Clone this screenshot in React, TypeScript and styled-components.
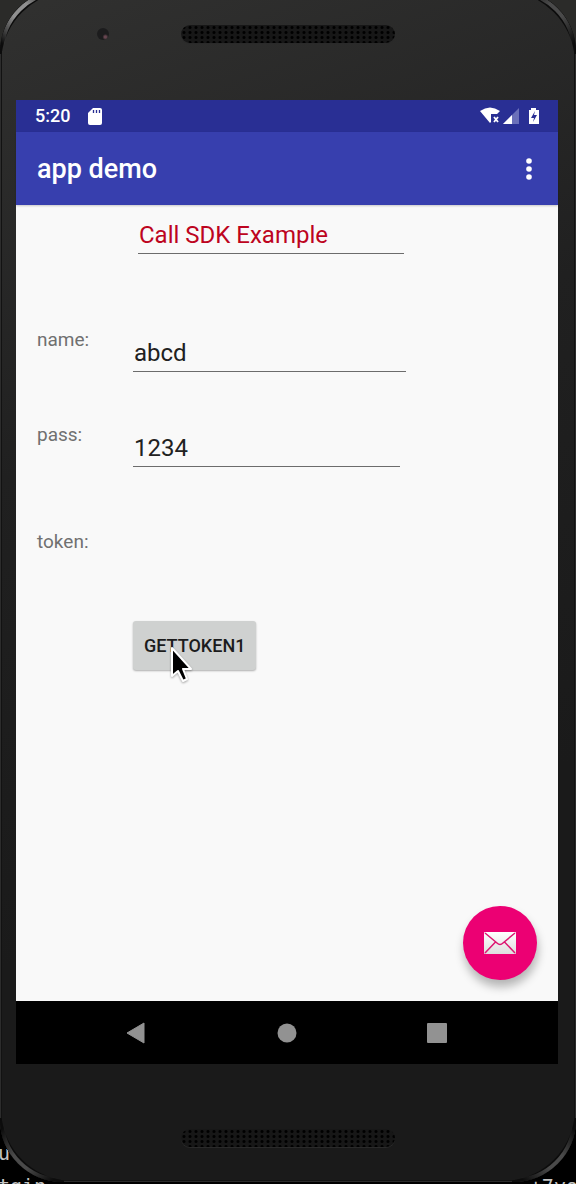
import React, { useState } from "react";
import styled, { createGlobalStyle } from "styled-components";

const GlobalStyle = createGlobalStyle`
  * { box-sizing: border-box; }
  html, body { margin: 0; padding: 0; background: #000; }
  body, button, input { font-family: Roboto, "Liberation Sans", sans-serif; }
`;

const Desktop = styled.div`
  position: relative;
  display: flex;
  min-height: 100vh;
  padding-bottom: 2px;
  overflow: hidden;
  background: linear-gradient(#2b2b29 0 120px, #000 120px);
`;

const TerminalText = styled.span<{ $side: "left" | "right"; $bottom: number }>`
  position: absolute;
  ${(p) => p.$side}: -2px;
  bottom: ${(p) => p.$bottom}px;
  color: #c4c4c4;
  font: 20px/20px "DejaVu Sans Mono", monospace;
  white-space: pre;
`;

const Phone = styled.div`
  position: relative;
  display: flex;
  flex-direction: column;
  flex: 1;
  min-width: 0;
  margin-top: -10px;
  border-radius: 62px;
  background: linear-gradient(160deg, #313130, #202020 35%, #1a1a1a 70%);
  box-shadow: inset 0 0 0 1px #2c2c2c, inset 0 0 0 2px #121212;
`;

const CornerArt = styled.svg<{ $x: "left" | "right"; $y: "top" | "bottom" }>`
  position: absolute;
  ${(p) => p.$x}: 0;
  ${(p) => p.$y}: 0;
  width: 64px;
  height: 64px;
  transform: scale(${(p) => (p.$x === "left" ? 1 : -1)}, ${(p) => (p.$y === "top" ? 1 : -1)});
`;

const Bezel = styled.div<{ $height: number; $top: number }>`
  position: relative;
  display: flex;
  justify-content: center;
  flex: none;
  height: ${(p) => p.$height}px;
  padding-top: ${(p) => p.$top}px;
`;

const Speaker = styled.div`
  width: 38%;
  max-width: 214px;
  height: 18px;
  border-radius: 9px;
  background: radial-gradient(circle, #000 0 1px, #171717 2px) 0 0 / 6px 5px;
  box-shadow: 0 1px 0 #2a2a2a;
`;

const Camera = styled.div`
  position: absolute;
  top: 38px;
  left: 97px;
  width: 12px;
  height: 12px;
  border-radius: 50%;
  background: radial-gradient(circle at 70% 75%, #674650 0 1px, #1c1c1d 3px);
`;

const Screen = styled.main`
  display: flex;
  flex-direction: column;
  flex: 1;
  margin: 0 18px 0 16px;
  background: #f9f9f9;
`;

const StatusBar = styled.div`
  display: flex;
  align-items: center;
  height: 32px;
  padding: 0 18px 0 19px;
  background: #292f94;
  color: #fff;
  font-size: 18px;
  font-weight: 500;
  line-height: 24px;
`;

const CardIcon = styled.svg`
  margin-left: 18px;
`;

const StatusIcons = styled.svg`
  margin-left: auto;
`;

const AppBar = styled.header`
  display: flex;
  align-items: center;
  justify-content: space-between;
  height: 73px;
  padding: 0 17px 0 21px;
  background: #373fae;
  color: #fff;
  box-shadow: 0 1px 2px rgba(0, 0, 0, 0.2);
`;

const Title = styled.h1`
  margin: 0;
  font-size: 27px;
  font-weight: 500;
  line-height: 32px;
`;

const IconButton = styled.button`
  display: flex;
  align-items: center;
  justify-content: center;
  width: 24px;
  height: 40px;
  padding: 0;
  border: 0;
  background: none;
  cursor: pointer;
`;

const Form = styled.form`
  display: flex;
  flex-direction: column;
  flex: 1;
  padding: 11px 21px 21px;
`;

const Heading = styled.div`
  display: flex;
  padding: 0 133px 0 101px;
`;

const Row = styled.div<{ $gap: number; $end: number }>`
  display: flex;
  align-items: flex-start;
  margin-top: ${(p) => p.$gap}px;
  padding-right: ${(p) => p.$end}px;
`;

const Label = styled.label`
  flex: none;
  width: 96px;
  color: #707070;
  font-size: 19px;
  line-height: 24px;
`;

const Field = styled.input<{ $accent?: boolean }>`
  flex: 1;
  min-width: 0;
  height: 38px;
  margin: 0;
  padding: 1px 0 0 1px;
  border: 0;
  border-bottom: 1px solid #6c6c6c;
  border-radius: 0;
  outline: 0;
  background: none;
  color: ${(p) => (p.$accent ? "#bd0420" : "#212121")};
  font-size: 24px;

  ${Row} & {
    margin-top: 6px;
  }
`;

const Action = styled.div`
  position: relative;
  align-self: flex-start;
  margin: 67px 0 0 96px;
`;

const TokenButton = styled.button`
  height: 49px;
  padding: 0 11px;
  border: 0;
  border-radius: 3px;
  background: #cfd1d0;
  color: #1c1c1c;
  font-size: 18px;
  font-weight: 500;
  box-shadow: 0 1px 2px rgba(0, 0, 0, 0.3);
`;

const Pointer = styled.svg`
  position: absolute;
  top: 24px;
  left: 36px;
  pointer-events: none;
  filter: drop-shadow(0 1px 1px rgba(0, 0, 0, 0.35));
`;

const Fab = styled.button`
  display: flex;
  align-items: center;
  justify-content: center;
  align-self: flex-end;
  width: 74px;
  height: 74px;
  margin-top: auto;
  padding: 0;
  border: 0;
  border-radius: 50%;
  background: #ec0073;
  box-shadow: 1px 7px 10px rgba(0, 0, 0, 0.28);
`;

const NavBar = styled.nav`
  display: flex;
  align-items: center;
  justify-content: space-between;
  height: 63px;
  padding: 0 109px 0 108px;
  background: #000;
`;

function Corner({ x, y }: { x: "left" | "right"; y: "top" | "bottom" }) {
  const bright = x === "left" && y === "top";
  const rim = `rim-${x}-${y}`;
  const tone = bright ? "#909090" : "#4a4a4a";
  return (
    <CornerArt $x={x} $y={y} viewBox="0 0 64 64" aria-hidden="true">
      <defs>
        <linearGradient id={rim} gradientUnits="userSpaceOnUse" x1="0" y1="64" x2="64" y2="0">
          <stop offset="0.1" stopColor={tone} stopOpacity="0" />
          <stop offset="0.4" stopColor={tone} />
          <stop offset="0.6" stopColor={tone} />
          <stop offset="0.9" stopColor={tone} stopOpacity="0" />
        </linearGradient>
      </defs>
      <path d="M0 64C0 27 27 0 64 0C30 5 5 30 0 64Z" fill="#0c0c0c" stroke="#0c0c0c" strokeWidth="3" />
      <path d="M2 62A60 60 0 0 1 62 2" fill="none" stroke={`url(#${rim})`} strokeWidth="4" />
    </CornerArt>
  );
}

const CornerClip = styled.div`
  position: absolute;
  inset: 0;
  overflow: hidden;
  border-radius: 62px;
  pointer-events: none;
`;

export default function App() {
  const [heading, setHeading] = useState("Call SDK Example");
  const [name, setName] = useState("abcd");
  const [pass, setPass] = useState("1234");

  return (
    <>
      <GlobalStyle />
      <Desktop>
        <TerminalText $side="left" $bottom={21}>u</TerminalText>
        <TerminalText $side="left" $bottom={-12}>tgin</TerminalText>
        <TerminalText $side="right" $bottom={-12}>+7vo</TerminalText>
        <Phone>
          <CornerClip>
            <Corner x="left" y="top" />
            <Corner x="right" y="top" />
            <Corner x="left" y="bottom" />
            <Corner x="right" y="bottom" />
          </CornerClip>
          <Bezel $height={110} $top={35}>
            <Camera />
            <Speaker />
          </Bezel>
          <Screen>
            <StatusBar>
              <time>5:20</time>
              <CardIcon width="14" height="17" viewBox="0 0 14 17" aria-hidden="true">
                <path d="M5 0H12Q14 0 14 2V15Q14 17 12 17H2Q0 17 0 15V5Z" fill="#fff" />
                <path d="M5.5 2V5M8.5 2V5M11.5 2V5" stroke="#292f94" strokeWidth="1.3" />
              </CardIcon>
              <StatusIcons width="60" height="18" viewBox="0 0 60 18" aria-hidden="true">
                <path d="M0 4Q10-3 20 4L17 7H11V15L10 16Z" fill="#fff" />
                <path d="M14 10L18 15M18 10L14 15" stroke="#fff" strokeWidth="1.8" />
                <path d="M23 17L39 1V17Z" fill="#6b70b9" />
                <path d="M23 17L32 8V17Z" fill="#fff" />
                <path d="M51 1H56V3H59V17H49V3H51Z" fill="#fff" />
                <path d="M55 4L51 11H54L53 15L57 8H54Z" fill="#292f94" />
              </StatusIcons>
            </StatusBar>
            <AppBar>
              <Title>app demo</Title>
              <IconButton type="button" aria-label="More options">
                <svg width="6" height="22" viewBox="0 0 6 22" fill="#fff">
                  <circle cx="3" cy="3" r="2.8" />
                  <circle cx="3" cy="11" r="2.8" />
                  <circle cx="3" cy="19" r="2.8" />
                </svg>
              </IconButton>
            </AppBar>
            <Form onSubmit={(e) => e.preventDefault()}>
              <Heading>
                <Field $accent aria-label="Heading" value={heading} onChange={(e) => setHeading(e.target.value)} />
              </Heading>
              <Row $gap={74} $end={131}>
                <Label htmlFor="name">name:</Label>
                <Field id="name" value={name} onChange={(e) => setName(e.target.value)} />
              </Row>
              <Row $gap={51} $end={137}>
                <Label htmlFor="pass">pass:</Label>
                <Field id="pass" value={pass} onChange={(e) => setPass(e.target.value)} />
              </Row>
              <Row $gap={63} $end={131}>
                <Label htmlFor="token">token:</Label>
                <output id="token" />
              </Row>
              <Action>
                <TokenButton type="submit">GETTOKEN1</TokenButton>
                <Pointer width="26" height="38" viewBox="0 0 26 38" aria-hidden="true">
                  <path
                    d="M3 3V31L9 26L14 36L18 34L14 24H22Z"
                    fill="#000"
                    stroke="#fff"
                    strokeWidth="2"
                    strokeLinejoin="round"
                  />
                </Pointer>
              </Action>
              <Fab type="button" aria-label="Send mail">
                <svg width="32" height="22" viewBox="0 0 32 22" aria-hidden="true">
                  <defs>
                    <linearGradient id="paper" x1="0" y1="0" x2="0" y2="1">
                      <stop offset="0" stopColor="#fff" />
                      <stop offset="1" stopColor="#dedede" />
                    </linearGradient>
                  </defs>
                  <rect width="32" height="22" rx="1" fill="url(#paper)" />
                  <path d="M1 1L13 11Q16 14 19 11L31 1M1 21L11.5 10M31 21L20.5 10" fill="none" stroke="#dc1671" strokeWidth="1.5" />
                </svg>
              </Fab>
            </Form>
            <NavBar>
              <IconButton type="button" aria-label="Back">
                <svg width="20" height="22" viewBox="0 0 20 22">
                  <path d="M1 11L18 1V21Z" fill="#929292" stroke="#929292" strokeLinejoin="round" />
                </svg>
              </IconButton>
              <IconButton type="button" aria-label="Home">
                <svg width="20" height="20" viewBox="0 0 20 20">
                  <circle cx="10" cy="10" r="9.5" fill="#929292" />
                </svg>
              </IconButton>
              <IconButton type="button" aria-label="Recent apps">
                <svg width="20" height="20" viewBox="0 0 20 20">
                  <rect width="20" height="20" rx="1" fill="#929292" />
                </svg>
              </IconButton>
            </NavBar>
          </Screen>
          <Bezel $height={118} $top={65}>
            <Speaker />
          </Bezel>
        </Phone>
      </Desktop>
    </>
  );
}
